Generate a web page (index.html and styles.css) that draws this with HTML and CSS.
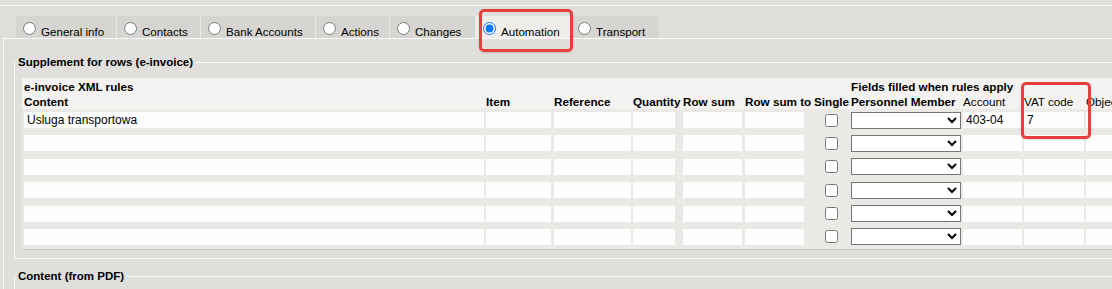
FILE: index.html
```html
<!DOCTYPE html>
<html>
<head>
<meta charset="utf-8">
<link rel="stylesheet" href="styles.css">
</head>
<body>
<div class="topline"></div>
<div class="tabs">
  <label class="tab tab-general"><input type="radio" name="tab"><span>General info</span></label>
  <label class="tab tab-contacts"><input type="radio" name="tab"><span>Contacts</span></label>
  <label class="tab tab-bank"><input type="radio" name="tab"><span>Bank Accounts</span></label>
  <label class="tab tab-actions"><input type="radio" name="tab"><span>Actions</span></label>
  <label class="tab tab-changes"><input type="radio" name="tab"><span>Changes</span></label>
  <label class="tab tab-auto active"><input type="radio" name="tab" checked><span>Automation</span></label>
  <label class="tab tab-transport"><input type="radio" name="tab"><span>Transport</span></label>
</div>
<div class="panel">
  <fieldset class="group">
    <legend>Supplement for rows (e-invoice)</legend>
    <div class="rules">
      <div class="grid head">
        <div class="title t-rules">e-invoice XML rules</div>
        <div class="title t-fields">Fields filled when rules apply</div>
        <div class="lbl">Content</div>
        <div class="lbl">Item</div>
        <div class="lbl">Reference</div>
        <div class="lbl">Quantity</div>
        <div class="lbl">Row sum</div>
        <div class="lbl">Row sum to</div>
        <div class="lbl">Single</div>
        <div class="lbl">Personnel Member</div>
        <div class="lbl plain">Account</div>
        <div class="lbl plain">VAT code</div>
        <div class="lbl plain">Object</div>
      </div>
      <div class="body">
        <div class="grid row">
          <input class="f w-content" type="text" value="Usluga transportowa">
          <input class="f w-item" type="text">
          <input class="f w-ref" type="text">
          <input class="f w-qty" type="text">
          <input class="f w-sum" type="text">
          <input class="f w-sum" type="text">
          <input class="chk" type="checkbox">
          <select class="sel"><option></option></select>
          <input class="f w-acc" type="text" value="403-04">
          <input class="f w-vat" type="text" value="7">
          <input class="f w-obj" type="text">
        </div>
        <div class="grid row">
          <input class="f w-content" type="text">
          <input class="f w-item" type="text">
          <input class="f w-ref" type="text">
          <input class="f w-qty" type="text">
          <input class="f w-sum" type="text">
          <input class="f w-sum" type="text">
          <input class="chk" type="checkbox">
          <select class="sel"><option></option></select>
          <input class="f w-acc" type="text">
          <input class="f w-vat" type="text">
          <input class="f w-obj" type="text">
        </div>
        <div class="grid row">
          <input class="f w-content" type="text">
          <input class="f w-item" type="text">
          <input class="f w-ref" type="text">
          <input class="f w-qty" type="text">
          <input class="f w-sum" type="text">
          <input class="f w-sum" type="text">
          <input class="chk" type="checkbox">
          <select class="sel"><option></option></select>
          <input class="f w-acc" type="text">
          <input class="f w-vat" type="text">
          <input class="f w-obj" type="text">
        </div>
        <div class="grid row">
          <input class="f w-content" type="text">
          <input class="f w-item" type="text">
          <input class="f w-ref" type="text">
          <input class="f w-qty" type="text">
          <input class="f w-sum" type="text">
          <input class="f w-sum" type="text">
          <input class="chk" type="checkbox">
          <select class="sel"><option></option></select>
          <input class="f w-acc" type="text">
          <input class="f w-vat" type="text">
          <input class="f w-obj" type="text">
        </div>
        <div class="grid row">
          <input class="f w-content" type="text">
          <input class="f w-item" type="text">
          <input class="f w-ref" type="text">
          <input class="f w-qty" type="text">
          <input class="f w-sum" type="text">
          <input class="f w-sum" type="text">
          <input class="chk" type="checkbox">
          <select class="sel"><option></option></select>
          <input class="f w-acc" type="text">
          <input class="f w-vat" type="text">
          <input class="f w-obj" type="text">
        </div>
        <div class="grid row">
          <input class="f w-content" type="text">
          <input class="f w-item" type="text">
          <input class="f w-ref" type="text">
          <input class="f w-qty" type="text">
          <input class="f w-sum" type="text">
          <input class="f w-sum" type="text">
          <input class="chk" type="checkbox">
          <select class="sel"><option></option></select>
          <input class="f w-acc" type="text">
          <input class="f w-vat" type="text">
          <input class="f w-obj" type="text">
        </div>
      </div>
    </div>
  </fieldset>
  <fieldset class="group group-pdf">
    <legend>Content (from PDF)</legend>
  </fieldset>
</div>
<div class="mark mark-tab"></div>
<div class="mark mark-vat"></div>
</body>
</html>
```

FILE: styles.css
```css
html, body {
  margin: 0;
  padding: 0;
  overflow: hidden;
}
body {
  position: relative;
  width: 1112px;
  height: 289px;
  background: #e0dfdc;
  font-family: "Liberation Sans", Arial, sans-serif;
  font-size: 12px;
  color: #000;
}
.topline {
  height: 5px;
  border-bottom: 1px solid #fbfbfa;
}
.tabs {
  display: flex;
  margin: 10px 0 0 16px;
  height: 22px;
}
.tab {
  display: flex;
  align-items: flex-start;
  flex: none;
  height: 22px;
  padding: 0 0 0 7px;
  background: #d6d5d2;
  border-right: 1px solid #ebeae7;
  box-sizing: border-box;
  font-size: 11.6px;
}
.tab-general { width: 101px; }
.tab-contacts { width: 84px; }
.tab-bank { width: 115px; }
.tab-actions { width: 74px; }
.tab-changes { width: 86px; }
.tab-auto { width: 95px; }
.tab-transport { width: 88px; border-right: 0; }
.tab input {
  margin: 6px 5px 0 0;
  width: 13px;
  height: 13px;
}
.tab span {
  padding-top: 9px;
  line-height: 14px;
  white-space: nowrap;
}
.tab.active {
  background: #eeedea;
}
.panel {
  margin-left: 3px;
  border-top: 1px solid #fbfbfa;
  border-left: 1px solid #fbfbfa;
}
.group {
  margin: 16px 0 0 10px;
  padding: 9px 0 8px 7px;
  border: 0;
  border-top: 1px solid #fbfbfa;
  border-left: 1px solid #fbfbfa;
  border-bottom: 1px solid #fbfbfa;
  min-width: 0;
}
.group legend {
  margin-left: -7px;
  padding: 0 3px 0 3px;
  font-weight: bold;
  font-size: 11.5px;
  line-height: 14px;
}
.group-pdf {
  margin-top: 10px;
  border-bottom: 0;
  height: 40px;
}
.rules {
  background: #ebe9e6;
  border-bottom: 1px solid #c7c6c3;
  padding-left: 2px;
  width: 1200px;
}
.grid {
  display: grid;
  grid-template-columns: 462px 68px 79px 50px 62px 69px 37px 112px 61px 62px 120px;
}
.head {
  background: #f4f3f1;
  margin-left: -2px;
  padding: 1px 0 0 2px;
  font-weight: bold;
  font-size: 11.7px;
  line-height: 15px;
  white-space: nowrap;
}
.head .plain {
  font-weight: normal;
}
.title {
  grid-row: 1;
}
.lbl {
  grid-row: 2;
}
.t-rules {
  grid-column: 1;
}
.t-fields {
  grid-column: 8 / span 3;
}
.row {
  height: 23.4px;
  align-items: start;
}
.f {
  box-sizing: border-box;
  height: 16px;
  margin: 3px 0 0 0;
  padding: 0 3px;
  border: 0;
  background: #fdfefd;
  font-family: inherit;
  font-size: 12px;
  color: #000;
  outline: none;
}
.w-content { width: 460px; }
.w-item { width: 65px; }
.w-ref { width: 77px; }
.w-qty { width: 42px; }
.w-sum { width: 59px; }
.w-acc { width: 59px; }
.w-vat { width: 60px; }
.w-obj { width: 80px; }
.chk {
  margin: 4.5px 0 0 11px;
  width: 13px;
  height: 13px;
}
.sel {
  box-sizing: border-box;
  width: 110px;
  height: 17px;
  margin: 2.5px 0 0 0;
  padding: 0;
  font-family: inherit;
  font-size: 12px;
  border: 1px solid #767676;
  border-radius: 0;
  background-color: #fff;
}
.mark {
  position: absolute;
  box-sizing: border-box;
  border: 3px solid #e5403e;
  border-radius: 5px;
  box-shadow: 0 1px 2px rgba(0, 0, 0, 0.15);
}
.mark-tab {
  left: 479px;
  top: 9px;
  width: 94px;
  height: 43px;
}
.mark-vat {
  left: 1021px;
  top: 82px;
  width: 70px;
  height: 57px;
}
```
